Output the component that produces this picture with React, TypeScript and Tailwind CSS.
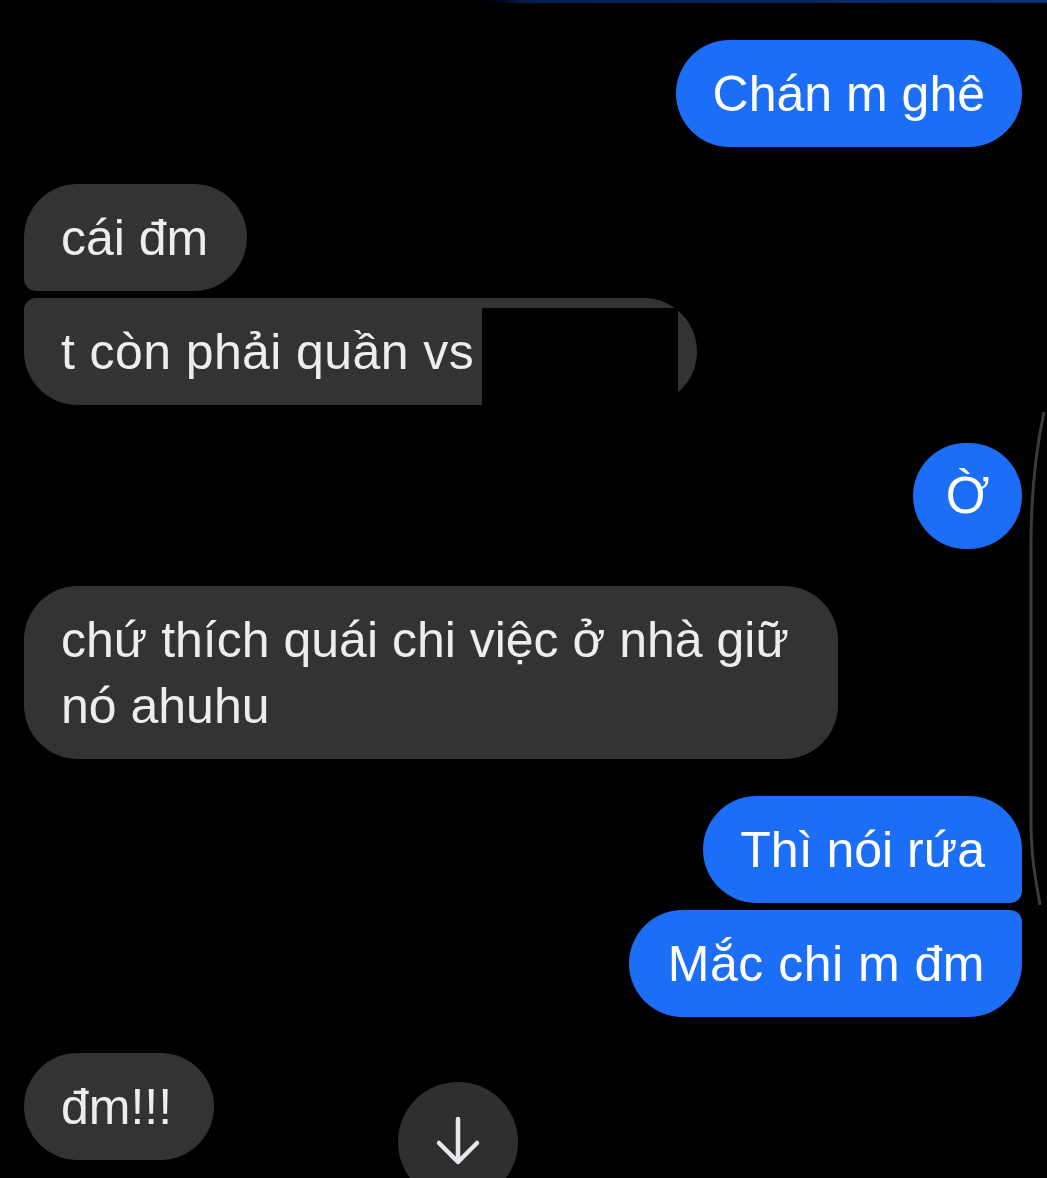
import React from "react";

const Blue = ({ children, className = "" }: { children: React.ReactNode; className?: string }) => (
  <div className="flex justify-end">
    <div className={`bg-[#1c6ef7] text-white text-[50px] leading-[66px] py-[20.5px] px-[37px] whitespace-nowrap ${className}`}>
      {children}
    </div>
  </div>
);

const Grey = ({ children, className = "" }: { children: React.ReactNode; className?: string }) => (
  <div className="flex justify-start">
    <div className={`relative bg-[#333335] text-[#ededed] text-[50px] leading-[66px] py-[20.5px] px-[37px] ${className}`}>
      {children}
    </div>
  </div>
);

export default function App() {
  return (
    <div
      className="relative w-full min-h-[1178px] h-[1178px] bg-black overflow-hidden"
      style={{ fontFamily: '"Liberation Sans", Arial, sans-serif' }}
    >
      <div className="h-[3px] w-full bg-gradient-to-r from-black from-[45%] via-[#071d4d] to-[#0d3078]" />
      <div className="flex flex-col pl-[24px] pr-[25px] pt-[37px]">
        <Blue className="rounded-[54px]">Chán m ghê</Blue>

        <div className="mt-[37px]">
          <Grey className="rounded-[54px] rounded-bl-[12px] whitespace-nowrap w-[223px]">cái đm</Grey>
        </div>
        <div className="mt-[7px]">
          <Grey className="rounded-[54px] rounded-tl-[12px] whitespace-nowrap w-[673px] tracking-[0.4px]">
            t còn phải quần vs
            <div className="absolute left-[458px] top-[10px] w-[196px] h-[97px] bg-black" />
          </Grey>
        </div>

        <div className="mt-[38px] flex justify-end">
          <div className="w-[109px] h-[106px] rounded-full bg-[#1c6ef7] text-white text-[51px] flex items-center justify-center">
            Ờ
          </div>
        </div>

        <div className="mt-[37px]">
          <Grey className="rounded-[54px] w-[814px]">chứ thích quái chi việc ở nhà giữ nó ahuhu</Grey>
        </div>

        <div className="mt-[37px]">
          <Blue className="rounded-[54px] rounded-br-[12px]">Thì nói rứa</Blue>
        </div>
        <div className="mt-[7px]">
          <Blue className="rounded-[54px] rounded-tr-[12px] w-[393px] text-right tracking-[0.5px]">Mắc chi m đm</Blue>
        </div>

        <div className="mt-[36px]">
          <Grey className="rounded-[54px] whitespace-nowrap w-[190px]">đm!!!</Grey>
        </div>
      </div>

      <svg className="absolute left-0 top-0 pointer-events-none" width="1047" height="1178">
        <path
          d="M1044 412 C1038 440 1031 480 1031 545 L1031 820 C1031 860 1036 880 1040 905"
          stroke="#3c3c3e"
          strokeWidth="3"
          fill="none"
        />
      </svg>

      <div className="absolute left-[398px] top-[1082px] w-[120px] h-[120px] rounded-full bg-[#2f2f30]">
        <svg width="120" height="120" viewBox="0 0 120 120">
          <path
            d="M60 37 L60 79 M41 61 L60 80 L79 61"
            stroke="#e8e8ec"
            strokeWidth="4.5"
            strokeLinecap="round"
            strokeLinejoin="round"
            fill="none"
          />
        </svg>
      </div>
    </div>
  );
}
